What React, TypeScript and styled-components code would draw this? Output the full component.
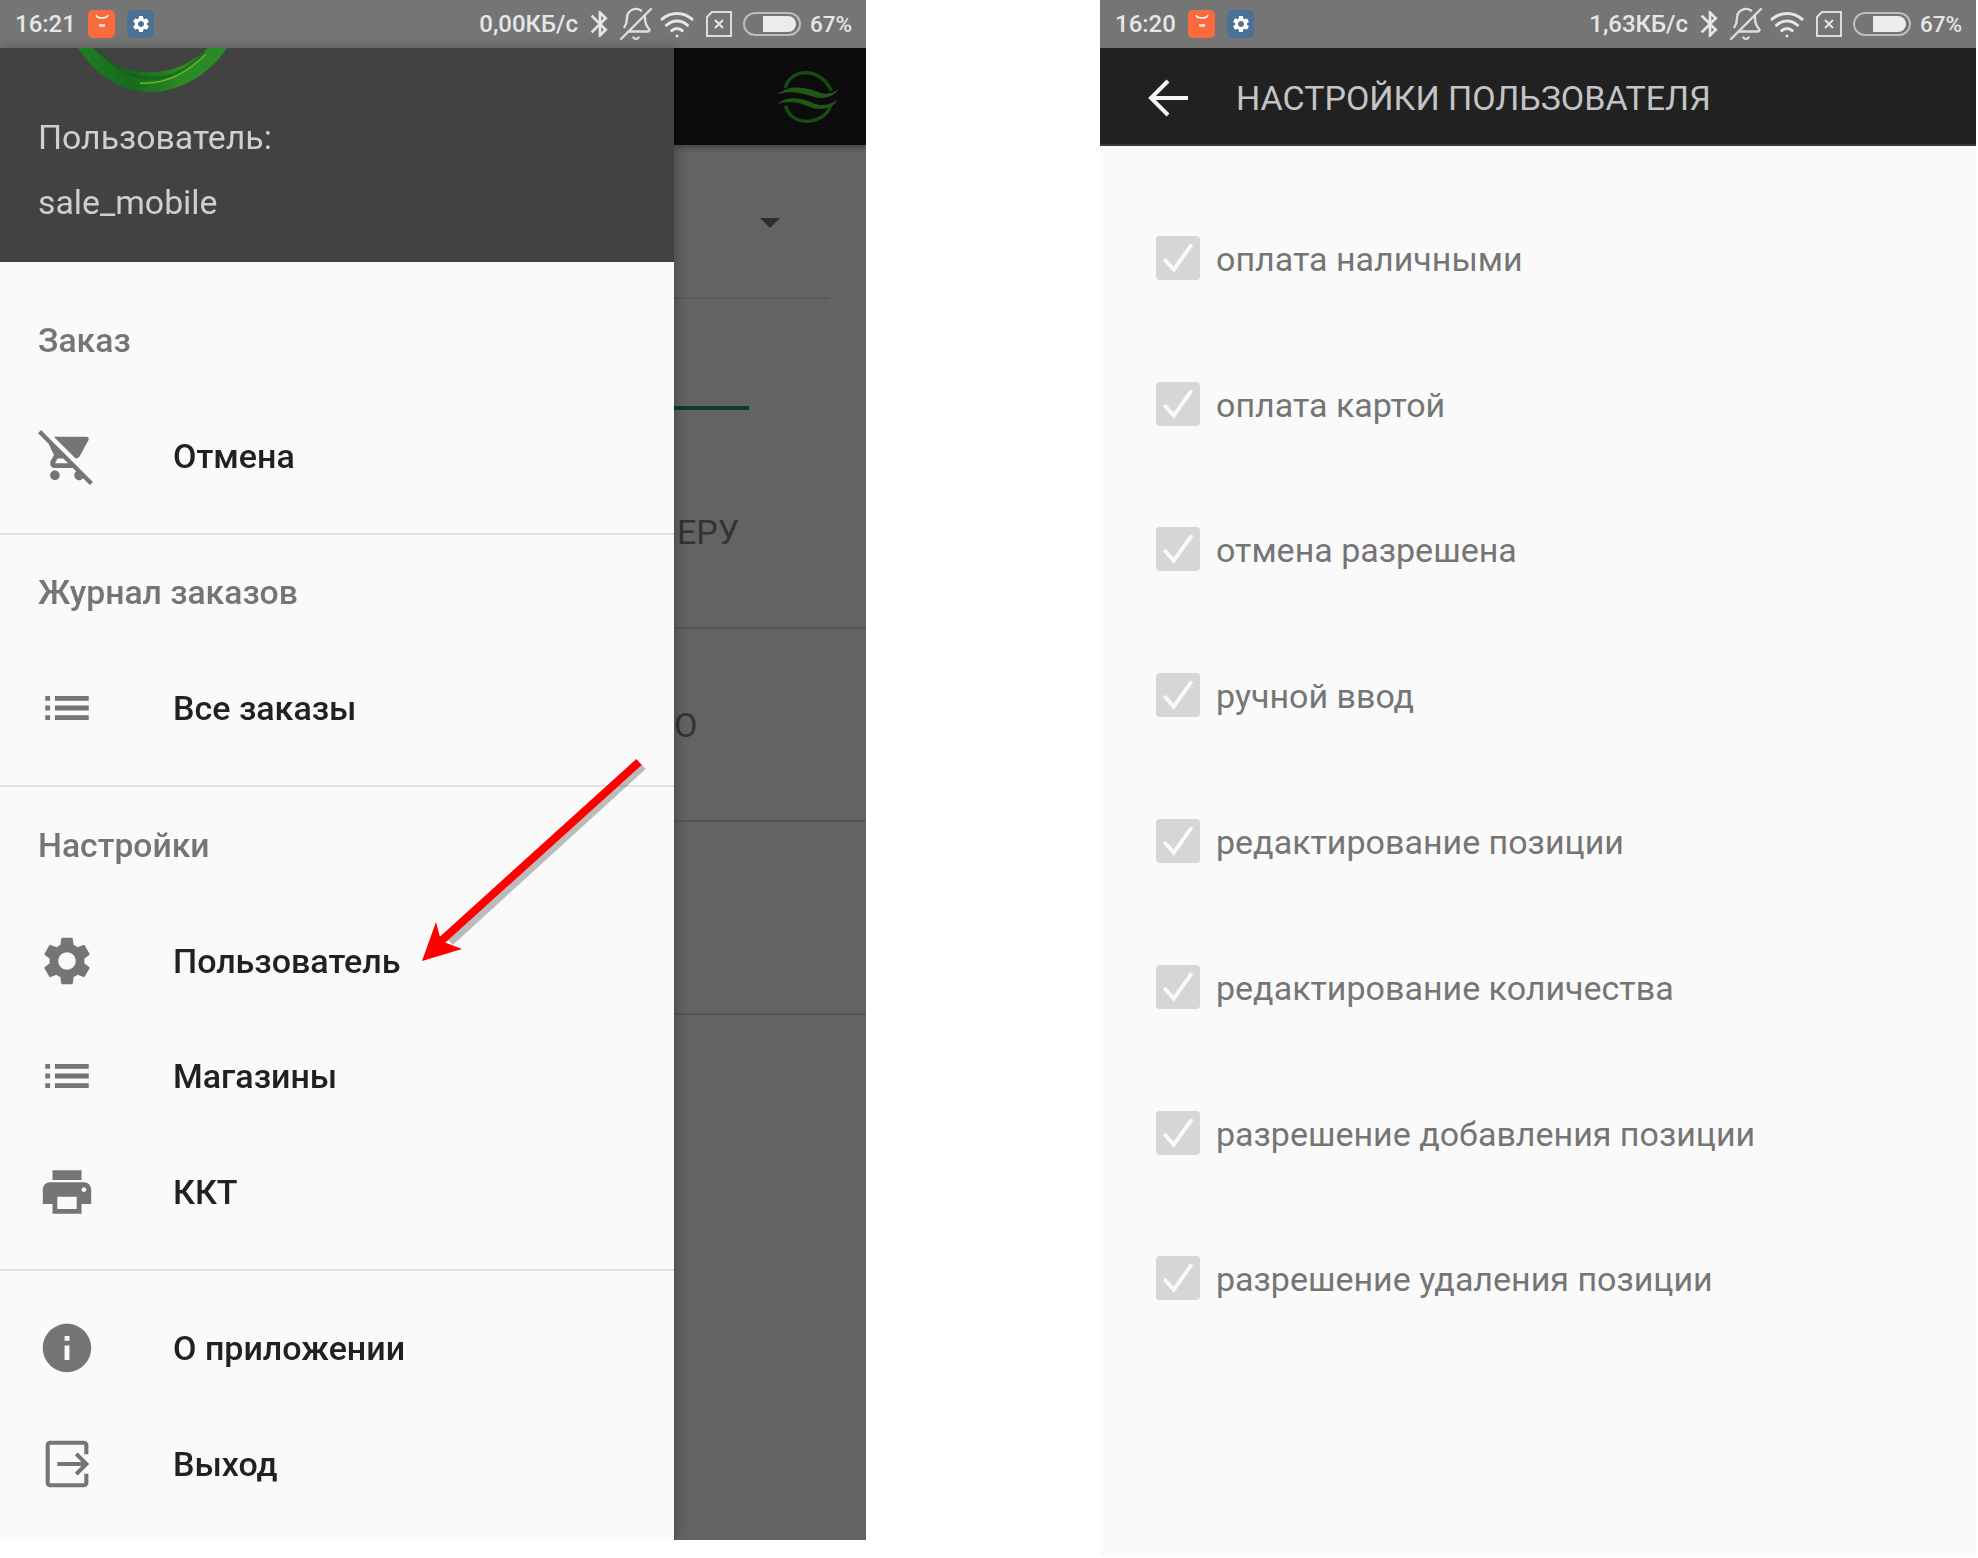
import React from 'react'
import styled, { createGlobalStyle } from 'styled-components'
import { MdRemoveShoppingCart, MdList, MdSettings, MdPrint, MdInfo, MdBluetooth, MdArrowDropDown } from 'react-icons/md'
import { BellOff, Wifi } from 'lucide-react'

const GlobalStyle = createGlobalStyle`
  html, body { margin: 0; padding: 0; background: #fff; }
  body { font-family: Roboto, "Noto Sans", sans-serif; }
`

const Page = styled.div`
  width: 1978px;
  height: 1558px;
  display: flex;
  align-items: flex-start;
  gap: 234px;
  overflow: hidden;
  filter: blur(0.7px);
`

const Phone = styled.div<{ $w: number; $h: number }>`
  position: relative;
  width: ${p => p.$w}px;
  height: ${p => p.$h}px;
  flex-shrink: 0;
  display: flex;
  flex-direction: column;
  overflow: hidden;
  background: #fafafa;
`

const Status = styled.div`
  height: 48px;
  flex-shrink: 0;
  background: #757575;
  color: #e6e6e6;
  display: flex;
  align-items: center;
  padding: 0 15px;
  box-sizing: border-box;
  font-size: 24px;
  font-weight: 500;
`

const Time = styled.span`
  width: 73px;
`

const AppBadge = styled.span<{ $bg: string }>`
  width: 27px;
  height: 28px;
  border-radius: 5px;
  background: ${p => p.$bg};
  margin-right: 12px;
  display: flex;
  align-items: center;
  justify-content: center;
`

const StatusRight = styled.div`
  margin-left: auto;
  display: flex;
  align-items: center;
`

const Glyph = styled.span<{ $gap: number; $flip?: boolean }>`
  margin-left: ${p => p.$gap}px;
  display: flex;
  ${p => (p.$flip ? 'transform: scaleX(-1);' : '')}
`

const Percent = styled.span`
  margin-left: 9px;
  width: 41px;
  font-size: 22.5px;
`

const Screen = styled.div`
  flex: 1;
  display: flex;
  min-height: 0;
`

const Drawer = styled.div`
  width: 674px;
  flex-shrink: 0;
  background: #fafafa;
  position: relative;
  z-index: 1;
  box-shadow: 3px 0 10px rgba(0, 0, 0, 0.25);
`

const DrawerHeader = styled.div`
  height: 214px;
  box-sizing: border-box;
  background: #424242;
  color: #cfcfcf;
  font-size: 33.8px;
  line-height: 65px;
  padding-left: 38px;
`

const Ring = styled.svg`
  display: block;
  width: 150px;
  height: 44px;
  margin: 0 0 13px 40px;
`

const Section = styled.div<{ $top: number; $last?: boolean }>`
  padding: ${p => p.$top}px 0 ${p => (p.$last ? 0 : 19)}px;
  border-bottom: ${p => (p.$last ? 'none' : '2px solid #e0e0e0')};
`

const SectionTitle = styled.div`
  height: 116px;
  display: flex;
  align-items: center;
  padding-left: 38px;
  font-size: 33.7px;
  font-weight: 500;
  color: #757575;
`

const Item = styled.div`
  height: 115.5px;
  display: flex;
  align-items: center;
  padding-left: 38px;
  font-size: 34px;
  font-weight: 500;
  color: #212121;
`

const IconSlot = styled.span`
  width: 58px;
  height: 58px;
  margin-right: 77px;
  color: #757575;
  font-size: 58px;
  display: flex;
  svg { display: block; }
`

const Backdrop = styled.div`
  flex: 1;
  background: #636363;
  min-width: 0;
  overflow: hidden;
`

const DimBar = styled.div`
  height: 97px;
  background: #0c0c0c;
  display: flex;
  align-items: center;
  justify-content: flex-end;
  padding-right: 27px;
  box-shadow: 0 3px 6px rgba(0, 0, 0, 0.3);
`

const Spinner = styled.div`
  width: 155px;
  height: 154px;
  box-sizing: border-box;
  border-bottom: 2px solid #5a5a5a;
  padding: 53px 0 0 72px;
  color: #2e2e2e;
  font-size: 48px;
  svg { display: block; }
`

const TabLine = styled.div`
  width: 75px;
  height: 4px;
  background: #0d3b31;
  margin: 107px 0 26px;
`

const DimRow = styled.div<{ $inset?: number }>`
  height: 193px;
  box-sizing: border-box;
  border-bottom: 2px solid #555;
  display: flex;
  align-items: center;
  padding-left: ${p => p.$inset ?? 0}px;
  color: #333;
  font-size: 34px;
`

const Arrow = styled.svg`
  position: absolute;
  z-index: 2;
  left: 410px;
  top: 750px;
  width: 240px;
  height: 220px;
`

const Toolbar = styled.div`
  height: 98px;
  flex-shrink: 0;
  background: #212121;
  border-bottom: 2px solid #3a3a3a;
  box-sizing: border-box;
  display: flex;
  align-items: center;
  padding: 3px 0 0 48px;
  color: #c4c4c4;
  font-size: 34px;
`

const BackIcon = styled.svg`
  width: 40px;
  height: 40px;
  margin-right: 48px;
`

const Options = styled.div`
  padding-top: 40px;
`

const Option = styled.div`
  height: 145.8px;
  display: flex;
  align-items: center;
  gap: 16px;
  padding-left: 56px;
  font-size: 34px;
  color: #757575;
`

const Box = styled.span`
  width: 44px;
  height: 44px;
  margin-top: -2px;
  border-radius: 4px;
  background: #d6d6d6;
  display: flex;
  align-items: center;
  justify-content: center;
`

const StatusBar = ({ time, speed }: { time: string; speed: string }) => (
  <Status>
    <Time>{time}</Time>
    <AppBadge $bg='#fb6a3d'>
      <svg width='20' height='20' viewBox='0 0 20 20'>
        <path d='M4 1 C5 5 15 5 16 1' fill='none' stroke='#fff' strokeWidth='1.4' />
        <rect x='7' y='10' width='6' height='3' fill='#ffd5c5' />
      </svg>
    </AppBadge>
    <AppBadge $bg='#4a7297'>
      <MdSettings size={20} color='#fff' />
    </AppBadge>
    <StatusRight>
      <span>{speed}</span>
      <Glyph $gap={6}><MdBluetooth size={32} color='#e6e6e6' /></Glyph>
      <Glyph $gap={2} $flip><BellOff size={36} color='#dedede' strokeWidth={1.6} /></Glyph>
      <Glyph $gap={5}><Wifi size={36} color='#e6e6e6' strokeWidth={2} /></Glyph>
      <Glyph $gap={10}>
        <svg width='28' height='28' viewBox='0 0 28 28'>
          <path d='M7 2 H26 V26 H2 V7 Z' fill='none' stroke='#dcdcdc' strokeWidth='2' />
          <path d='M10 10 L18 18 M18 10 L10 18' stroke='#e6e6e6' strokeWidth='2' />
        </svg>
      </Glyph>
      <Glyph $gap={10}>
        <svg width='58' height='26' viewBox='0 0 58 26'>
          <rect x='1' y='2' width='56' height='22' rx='11' fill='none' stroke='#bdbdbd' strokeWidth='2' />
          <path d='M20 5 H45 A8 8 0 0 1 45 21 H20 Z' fill='#ececec' />
        </svg>
      </Glyph>
      <Percent>67%</Percent>
    </StatusRight>
  </Status>
)

const ExitIcon = () => (
  <svg width='58' height='58' viewBox='0 0 24 24' fill='none' stroke='currentColor' strokeWidth='1.7'>
    <path d='M20 8 V4.2 A1 1 0 0 0 19 3.2 H5 A1 1 0 0 0 4 4.2 V19.8 A1 1 0 0 0 5 20.8 H19 A1 1 0 0 0 20 19.8 V16' />
    <path d='M8 12 H20 M15.8 7.8 L20 12 L15.8 16.2' />
  </svg>
)

const App = () => {
  const options = [
    'оплата наличными',
    'оплата картой',
    'отмена разрешена',
    'ручной ввод',
    'редактирование позиции',
    'редактирование количества',
    'разрешение добавления позиции',
    'разрешение удаления позиции',
  ]

  return (
    <>
      <GlobalStyle />
      <Page>
        <Phone $w={866} $h={1540}>
          <StatusBar time='16:21' speed='0,00КБ/с' />
          <Screen>
            <Drawer>
              <DrawerHeader>
                <Ring viewBox='0 0 150 44'>
                  <defs>
                    <linearGradient id='ringGreen' x1='0' x2='1' y1='0' y2='0'>
                      <stop offset='0' stopColor='#1f7f22' />
                      <stop offset='0.35' stopColor='#17691c' />
                      <stop offset='0.7' stopColor='#2c8a22' />
                      <stop offset='1' stopColor='#268c2a' />
                    </linearGradient>
                  </defs>
                  <path d='M0 0 C18 28 44 44 72 44 C102 44 132 26 149 0 H130 C110 18 92 24 72 24 C48 24 30 16 15 0 Z' fill='url(#ringGreen)' />
                  <path d='M20 0 C36 20 50 29 72 30 C96 31 112 20 127 4' fill='none' stroke='#125e18' strokeWidth='3' opacity='0.6' />
                  <path d='M62 35 C90 37 112 22 128 6' fill='none' stroke='#6fb52a' strokeWidth='1.6' />
                </Ring>
                <div>Пользователь:</div>
                <div>sale_mobile</div>
              </DrawerHeader>
              <Section $top={20}>
                <SectionTitle>Заказ</SectionTitle>
                <Item><IconSlot><MdRemoveShoppingCart /></IconSlot>Отмена</Item>
              </Section>
              <Section $top={0}>
                <SectionTitle>Журнал заказов</SectionTitle>
                <Item><IconSlot><MdList /></IconSlot>Все заказы</Item>
              </Section>
              <Section $top={0}>
                <SectionTitle>Настройки</SectionTitle>
                <Item><IconSlot><MdSettings /></IconSlot>Пользователь</Item>
                <Item><IconSlot><MdList /></IconSlot>Магазины</Item>
                <Item><IconSlot><MdPrint /></IconSlot>ККТ</Item>
              </Section>
              <Section $top={20} $last>
                <Item><IconSlot><MdInfo /></IconSlot>О приложении</Item>
                <Item><IconSlot><ExitIcon /></IconSlot>Выход</Item>
              </Section>
            </Drawer>
            <Backdrop>
              <DimBar>
                <svg width='62' height='54' viewBox='40 48 212 182'>
                  <g fill='none' stroke='#184a13' strokeWidth='12'>
                    <path d='M68 108 C85 40 190 35 226 118' />
                    <path d='M70 168 C82 240 200 240 224 168' />
                  </g>
                  <g fill='#215717'>
                    <path d='M42 130 C90 90 150 110 190 125 C210 132 235 125 252 110 C235 140 200 148 165 138 C120 125 85 115 42 130 Z' />
                    <path d='M38 165 C80 130 130 145 165 160 C190 172 225 165 248 148 C230 178 190 188 150 172 C110 155 80 150 38 165 Z' />
                  </g>
                </svg>
              </DimBar>
              <Spinner><MdArrowDropDown /></Spinner>
              <TabLine />
              <DimRow $inset={3}>ЕРУ</DimRow>
              <DimRow>О</DimRow>
              <DimRow />
            </Backdrop>
          </Screen>
          <Arrow viewBox='410 750 240 220'>
            <path d='M643 766 L450 942' stroke='rgba(0,0,0,0.25)' strokeWidth='8' />
            <path d='M639 762 L440 942' stroke='#fe0000' strokeWidth='8' />
            <path d='M422 961 L436 922 L441 941 L462 949 Z' fill='#fe0000' />
          </Arrow>
        </Phone>

        <Phone $w={876} $h={1555}>
          <StatusBar time='16:20' speed='1,63КБ/с' />
          <Toolbar>
            <BackIcon viewBox='0 0 40 40' fill='none' stroke='#f5f5f5' strokeWidth='4'>
              <path d='M40 20 H4 M20 3 L3 20 L20 37' />
            </BackIcon>
            НАСТРОЙКИ ПОЛЬЗОВАТЕЛЯ
          </Toolbar>
          <Options>
            {options.map(label => (
              <Option key={label}>
                <Box>
                  <svg width='38' height='38' viewBox='0 0 36 36' fill='none' stroke='#fafafa' strokeWidth='3.6'>
                    <path d='M5 19 L14 29 L31 5' />
                  </svg>
                </Box>
                {label}
              </Option>
            ))}
          </Options>
        </Phone>
      </Page>
    </>
  )
}

export default App
